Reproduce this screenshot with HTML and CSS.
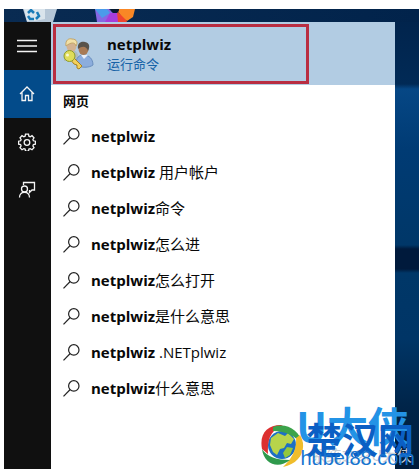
FILE: index.html
```html
<!DOCTYPE html>
<html lang="zh-CN">
<head>
<meta charset="utf-8">
<title>netplwiz</title>
<link rel="stylesheet" href="styles.css">
</head>
<body>
<svg class="defs" width="0" height="0" aria-hidden="true">
  <symbol id="search" viewBox="0 0 17 17"><circle cx="10.8" cy="5.9" r="5.2"/><path d="M7.200 9.500L.5 16.300"/></symbol>
</svg>
<div class="desktop">
  <div class="strip">
    <svg width="150" height="13" viewBox="0 0 150 13" aria-hidden="true">
      <path d="M19 0H53L49 13H23Z" fill="#b5c6d6"/>
      <path d="M20 0H41V10L30 12H23Z" fill="#d9e4ec"/>
      <path d="M24 4l3-3 3 3M24 7l2 3h4M33 3l2 4-3 3" fill="none" stroke="#197bb8" stroke-width="2.500"/>
      <path d="M91 0h14l4 4-7 9H93Z" fill="#8668e4"/>
      <path d="M91 0h12l3 4-8 5Z" fill="#4b9bea"/>
      <path d="M106 4l8 0 2 9h-15Z" fill="#a63ddb"/>
      <path d="M113 3l8 5 2 5h-9Z" fill="#f0442e"/>
      <path d="M115 0h16l-2 8-6 4-9-9Z" fill="#f98725"/>
      <circle cx="111" cy="0" r="4" fill="#07192f"/>
    </svg>
  </div>
  <main class="panel">
    <nav class="rail">
      <button aria-label="菜单"><svg width="22" height="22" viewBox="0 0 22 22"><path d="M1 5.500h20M1 11h20M1 16.500h20"/></svg></button>
      <button class="active" aria-label="主页"><svg width="18" height="18" viewBox="0 0 18 18"><path d="M2 9L9 2l7 7M4 7.500V15.500H7.500V10.500H10.500V15.500H14V7.500"/></svg></button>
      <button aria-label="设置"><svg width="18" height="18" viewBox="0 0 18 18"><path d="M7.500 1.200h3l.4 2 1.300.6 1.800-1.100 2 2.100-1.100 1.700.5 1.300 2 .4v3l-2 .4-.5 1.300 1.100 1.700-2 2.100-1.800-1.100-1.300.5-.4 2h-3l-.4-2-1.300-.5L4 16.700l-2-2.100 1.100-1.700-.5-1.300-2-.4v-3l2-.4.5-1.300L2 4.800l2-2.100 1.800 1.100 1.300-.6Z"/><circle cx="9" cy="9.500" r="2.800"/></svg></button>
      <button aria-label="反馈"><svg width="18" height="18" viewBox="0 0 18 18"><path d="M5.500 4V1.500H16.500V9H14L11.500 11.500V9"/><circle cx="6.500" cy="8" r="3"/><path d="M1.500 16.500c0-7 10-7 10 0"/></svg></button>
    </nav>
    <section class="results">
      <a class="best" href="#">
        <span class="frame">
          <svg width="32" height="32" viewBox="0 0 32 32" aria-hidden="true">
            <path d="M1 23C1 14 5 12 9 12s7 4 7 10Z" fill="#aebbc0"/>
            <ellipse cx="8.500" cy="8" rx="5" ry="6" fill="#d3b291"/>
            <path d="M3 8C2 2 6 0 9 1c5 0 6 4 4 7-1-4-5-4-10 0" fill="#f2e0a6" stroke="#c3a568"/>
            <path d="M13 27c0-8 3-10 8-10s9 4 9 10c-4 3-12 3-17 0Z" fill="#8caddd" stroke="#6b8fbe"/>
            <path d="M18 17l3 4 4-4" fill="#e8eef8"/>
            <ellipse cx="20.500" cy="11" rx="5" ry="6" fill="#a87a55"/>
            <path d="M15 11C14 5 18 3 22 4c5 1 5 5 3 9-1-4-5-6-10-2" fill="#58524a"/>
            <path d="M10 19l9 9-3 3-2-1v-3l-3-1-4-5Z" fill="#f3d05b" stroke="#a98321"/>
            <circle cx="6.500" cy="18" r="5.500" fill="#dfdd59" stroke="#8e9b2b"/>
            <circle cx="4.500" cy="17" r="1.500" fill="#f8f7d2"/>
          </svg>
          <span class="label"><strong>netplwiz</strong><small>运行命令</small></span>
        </span>
      </a>
      <h2>网页</h2>
      <ul>
        <li><a href="#"><svg><use href="#search"/></svg><span><b>netplwiz</b></span></a></li>
        <li><a href="#"><svg><use href="#search"/></svg><span><b>netplwiz</b> 用户帐户</span></a></li>
        <li><a href="#"><svg><use href="#search"/></svg><span><b>netplwiz</b>命令</span></a></li>
        <li><a href="#"><svg><use href="#search"/></svg><span><b>netplwiz</b>怎么进</span></a></li>
        <li><a href="#"><svg><use href="#search"/></svg><span><b>netplwiz</b>怎么打开</span></a></li>
        <li><a href="#"><svg><use href="#search"/></svg><span><b>netplwiz</b>是什么意思</span></a></li>
        <li><a href="#"><svg><use href="#search"/></svg><span><b>netplwiz</b> .NETplwiz</span></a></li>
        <li><a href="#"><svg><use href="#search"/></svg><span><b>netplwiz</b>什么意思</span></a></li>
      </ul>
    </section>
  </main>
</div>
<div class="watermark">
  <span class="brand">U大侠</span>
  <svg class="globe" width="46" height="46" viewBox="0 0 46 46" aria-hidden="true">
    <circle cx="22" cy="22" r="14" fill="#1d6fc4"/>
    <path d="M11 15l7-5 7 3 3-3 6 6-3 5-4-1-3 5-4 1-3 6-4-3-3-7Z" fill="#b7d44b"/>
    <path d="M27 24l6 1-3 7-5 3-2-5Z" fill="#94c83c"/>
    <path d="M6 26C5 12 12 7 23 6c10 2 15 8 15 17-3 10-10 15-17 15C13 37 8 33 6 26Z" fill="none" stroke="#fff" stroke-width="2"/>
    <path d="M2 26C-1 10 8 1 23 2 12 7 7 14 8 31Z" fill="#dc3030"/>
    <path d="M13 4c13-5 27 3 30 18-8-9-17-14-30-14Z" fill="#3ca34a"/>
    <path d="M40 12c8 14 0 29-17 32 8-7 14-17 13-29Z" fill="#f0bd2c"/>
    <path d="M2 26c5 8 15 11 28 11-11 9-26 5-28-11Z" fill="#2f9a4c"/>
  </svg>
  <span class="faint">系统之家U大侠</span>
  <span class="site">楚汉网</span>
  <span class="domain">hubei88.com</span>
</div>
</body>
</html>
```
FILE: styles.css
```css
* { box-sizing: border-box; }
body {
  margin: 0;
  min-height: 100vh;
  display: flex;
  padding: 9px 0 0 4px;
  position: relative;
  overflow: hidden;
  background: #fff;
  color: #080808;
  font: 15px/20px "Open Sans", "Noto Sans CJK SC", sans-serif;
}
a { color: inherit; text-decoration: none; }
.defs { position: absolute; }
.desktop {
  flex: 1;
  display: flex;
  flex-direction: column;
  padding-right: 24px;
  background: linear-gradient(#01234b 0, #012a56 75px, #064785 80px, #003b74 140px, #003768 236px, #001a3c 240px, #001a3c 260px, #003768 264px, #003566 330px, #002448 400px, #001b3b);
}
.strip { height: 13px; background: linear-gradient(90deg, #092b52, #01234b); margin-right: -24px; }
.strip svg { display: block; }
.panel { flex: 1; display: flex; background: #fff; }
.rail { width: 47px; background: #101010; display: flex; flex-direction: column; }
.rail button {
  height: 48px;
  padding: 0 1px 0 0;
  border: 0;
  background: none;
  display: grid;
  place-items: center;
}
.rail .active { background: #034b8a; }
svg { fill: none; }
.rail svg { stroke: #f5f5f5; stroke-width: 1.3; }
.results { flex: 1; min-width: 0; }
.best { display: block; padding: 2px 86px 1px 2px; background: #b2cce3; }
.frame {
  display: flex;
  align-items: center;
  gap: 12px;
  height: 60px;
  padding: 0 7px;
  border: 3px solid #b92d41;
}
.label { display: flex; flex-direction: column; }
.label strong { font-size: 15px; line-height: 20px; }
.label small { font-size: 13px; line-height: 20px; color: #1763a7; }
h2 { margin: 0; padding: 6px 12px 7px; font-size: 13px; line-height: 20px; }
ul { list-style: none; margin: 0; padding: 0; }
li a { display: flex; align-items: center; gap: 11px; height: 36px; padding-left: 12px; }
li svg { width: 17px; height: 17px; stroke: #222; stroke-width: 1.2; }
.watermark {
  position: absolute;
  right: 2px;
  bottom: 0;
  width: 157px;
  height: 66px;
  white-space: nowrap;
  font-family: "Noto Sans CJK SC", sans-serif;
}
.watermark > * { position: absolute; }
.brand { right: 8px; top: 0; font-size: 41px; line-height: 42px; font-weight: 700; color: #2393e6; }
.globe { left: 0; top: 20px; }
.faint { right: 5px; top: 42px; font-size: 15px; line-height: 20px; color: #c6cdd3; }
.site { right: 3px; top: 17px; font-size: 36px; line-height: 36px; font-weight: 700; color: #0b5fc4; }
.domain { right: 2px; top: 45px; font: 20px/20px "Liberation Sans", sans-serif; color: #1674cf; }
```
